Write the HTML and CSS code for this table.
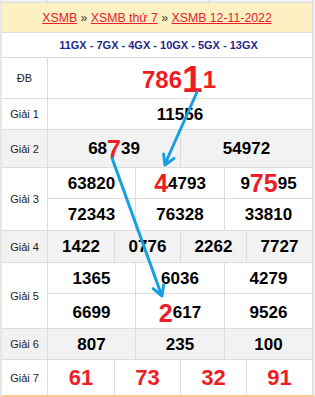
FILE: index.html
```html
<!DOCTYPE html>
<html lang="vi">
<head>
<meta charset="utf-8">
<title>XSMB 12-11-2022</title>
<link rel="stylesheet" href="styles.css">
</head>
<body>
<div class="page">
  <div class="board">
    <div class="prev"><span></span><span></span><span></span></div>
    <div class="head">
      <a href="#">XSMB</a>&nbsp;<span class="sep">»</span>&nbsp;<a href="#">XSMB thứ 7</a>&nbsp;<span class="sep">»</span>&nbsp;<a href="#">XSMB 12-11-2022</a>
    </div>
    <div class="lucky">11GX - 7GX - 4GX - 10GX - 5GX - 13GX</div>

    <div class="row r-db">
      <div class="lbl">ĐB</div>
      <div class="nums c1"><div class="n db">786<span class="big">1</span>1</div></div>
    </div>

    <div class="row r-g1">
      <div class="lbl">Giải 1</div>
      <div class="nums c1"><div class="n">11556</div></div>
    </div>

    <div class="row r-g2 alt">
      <div class="lbl">Giải 2</div>
      <div class="nums c2">
        <div class="n">68<span class="hl">7</span>39</div>
        <div class="n">54972</div>
      </div>
    </div>

    <div class="row r-g3">
      <div class="lbl">Giải 3</div>
      <div class="nums c3 g3">
        <div class="n">63820</div>
        <div class="n"><span class="hl">4</span>4793</div>
        <div class="n">9<span class="hl">75</span>95</div>
        <div class="n">72343</div>
        <div class="n">76328</div>
        <div class="n">33810</div>
      </div>
    </div>

    <div class="row r-g4 alt">
      <div class="lbl">Giải 4</div>
      <div class="nums c4">
        <div class="n">1422</div>
        <div class="n">0776</div>
        <div class="n">2262</div>
        <div class="n">7727</div>
      </div>
    </div>

    <div class="row r-g5">
      <div class="lbl">Giải 5</div>
      <div class="nums c3 g5">
        <div class="n">1365</div>
        <div class="n">6036</div>
        <div class="n">4279</div>
        <div class="n low">6699</div>
        <div class="n low"><span class="hl">2</span>617</div>
        <div class="n low">9526</div>
      </div>
    </div>

    <div class="row r-g6 alt">
      <div class="lbl">Giải 6</div>
      <div class="nums c3">
        <div class="n">807</div>
        <div class="n">235</div>
        <div class="n">100</div>
      </div>
    </div>

    <div class="row r-g7">
      <div class="lbl">Giải 7</div>
      <div class="nums c4 g7">
        <div class="n">61</div>
        <div class="n">73</div>
        <div class="n">32</div>
        <div class="n">91</div>
      </div>
    </div>
  </div>

  <svg class="arrows" width="315" height="397" viewBox="0 0 315 397" aria-hidden="true">
    <g stroke="#169fe2" stroke-width="3" stroke-linecap="round" stroke-linejoin="round" fill="none">
      <path d="M197 92 L165 164"/>
      <path d="M163.6 154 L165 165 L174 158.4"/>
      <path d="M112 158 L161.5 295"/>
      <path d="M153.2 288.6 L162 296 L163.6 285"/>
    </g>
  </svg>
</div>
</body>
</html>
```

FILE: styles.css
```css
body {
  margin: 0;
  background: #ffffff;
  font-family: "Liberation Sans", Arial, sans-serif;
}

.page {
  position: relative;
  width: 315px;
  height: 397px;
  overflow: hidden;
}

.board {
  width: 310px;
  padding-right: 1px;
  border-left: 2px solid #e6e6e6;
  border-right: 2px solid #ececec;
  border-bottom: 2px solid #f7c892;
  background: #dcdcdc;
  display: grid;
  gap: 1px;
}

.prev {
  height: 2px;
  display: grid;
  grid-template-columns: 45px 160px 103px;
  gap: 1px;
}

.prev span {
  background: #f0f0f0;
}

.head {
  height: 29px;
  background: #fdf1c4;
  display: flex;
  align-items: center;
  justify-content: center;
  font-size: 12.3px;
  white-space: nowrap;
}

.head a {
  color: #e5212c;
  text-decoration: underline;
}

.head .sep {
  color: #333333;
}

.lucky {
  height: 24px;
  background: #ffffff;
  display: flex;
  align-items: center;
  justify-content: center;
  font-size: 11px;
  font-weight: bold;
  color: #1f2a8c;
  padding-left: 3px;
}

.row {
  display: grid;
  grid-template-columns: 45px 264px;
  gap: 1px;
}

.lbl {
  background: #ffffff;
  display: flex;
  align-items: center;
  justify-content: center;
  font-size: 11px;
  color: #222222;
}

.nums {
  display: grid;
  gap: 1px;
}

.c1 { grid-template-columns: 264px; }
.c2 { grid-template-columns: 132px 131px; }
.c3 { grid-template-columns: 87px 88px 87px; }
.c4 { grid-template-columns: 66px 65px 65px 65px; }

.n {
  background: #ffffff;
  display: flex;
  align-items: center;
  justify-content: center;
  font-weight: bold;
  font-size: 17px;
  line-height: 1;
  color: #000000;
  white-space: nowrap;
}

.alt .lbl,
.alt .n {
  background: #f2f2f2;
}

.hl {
  color: #ee1c25;
  font-size: 25px;
  line-height: 0;
}

.r-db { height: 40px; }
.r-g1 { height: 30px; }
.r-g2 { height: 37px; }
.r-g3 { height: 62px; }
.r-g4 { height: 31px; }
.r-g5 { height: 65px; }
.r-g6 { height: 30px; }
.r-g7 { height: 35px; }

.g3 { grid-template-rows: 30px 31px; }
.g5 { grid-template-rows: 30px 34px; }

.n.low {
  padding-top: 3px;
}

.n.db {
  color: #ee1c25;
  font-size: 24px;
  padding-top: 4px;
  padding-right: 2px;
}

.big {
  font-size: 37px;
  line-height: 0;
}

.g7 .n {
  color: #ee1c25;
  font-size: 22px;
}

.arrows {
  position: absolute;
  left: 0;
  top: 0;
  pointer-events: none;
}
```
